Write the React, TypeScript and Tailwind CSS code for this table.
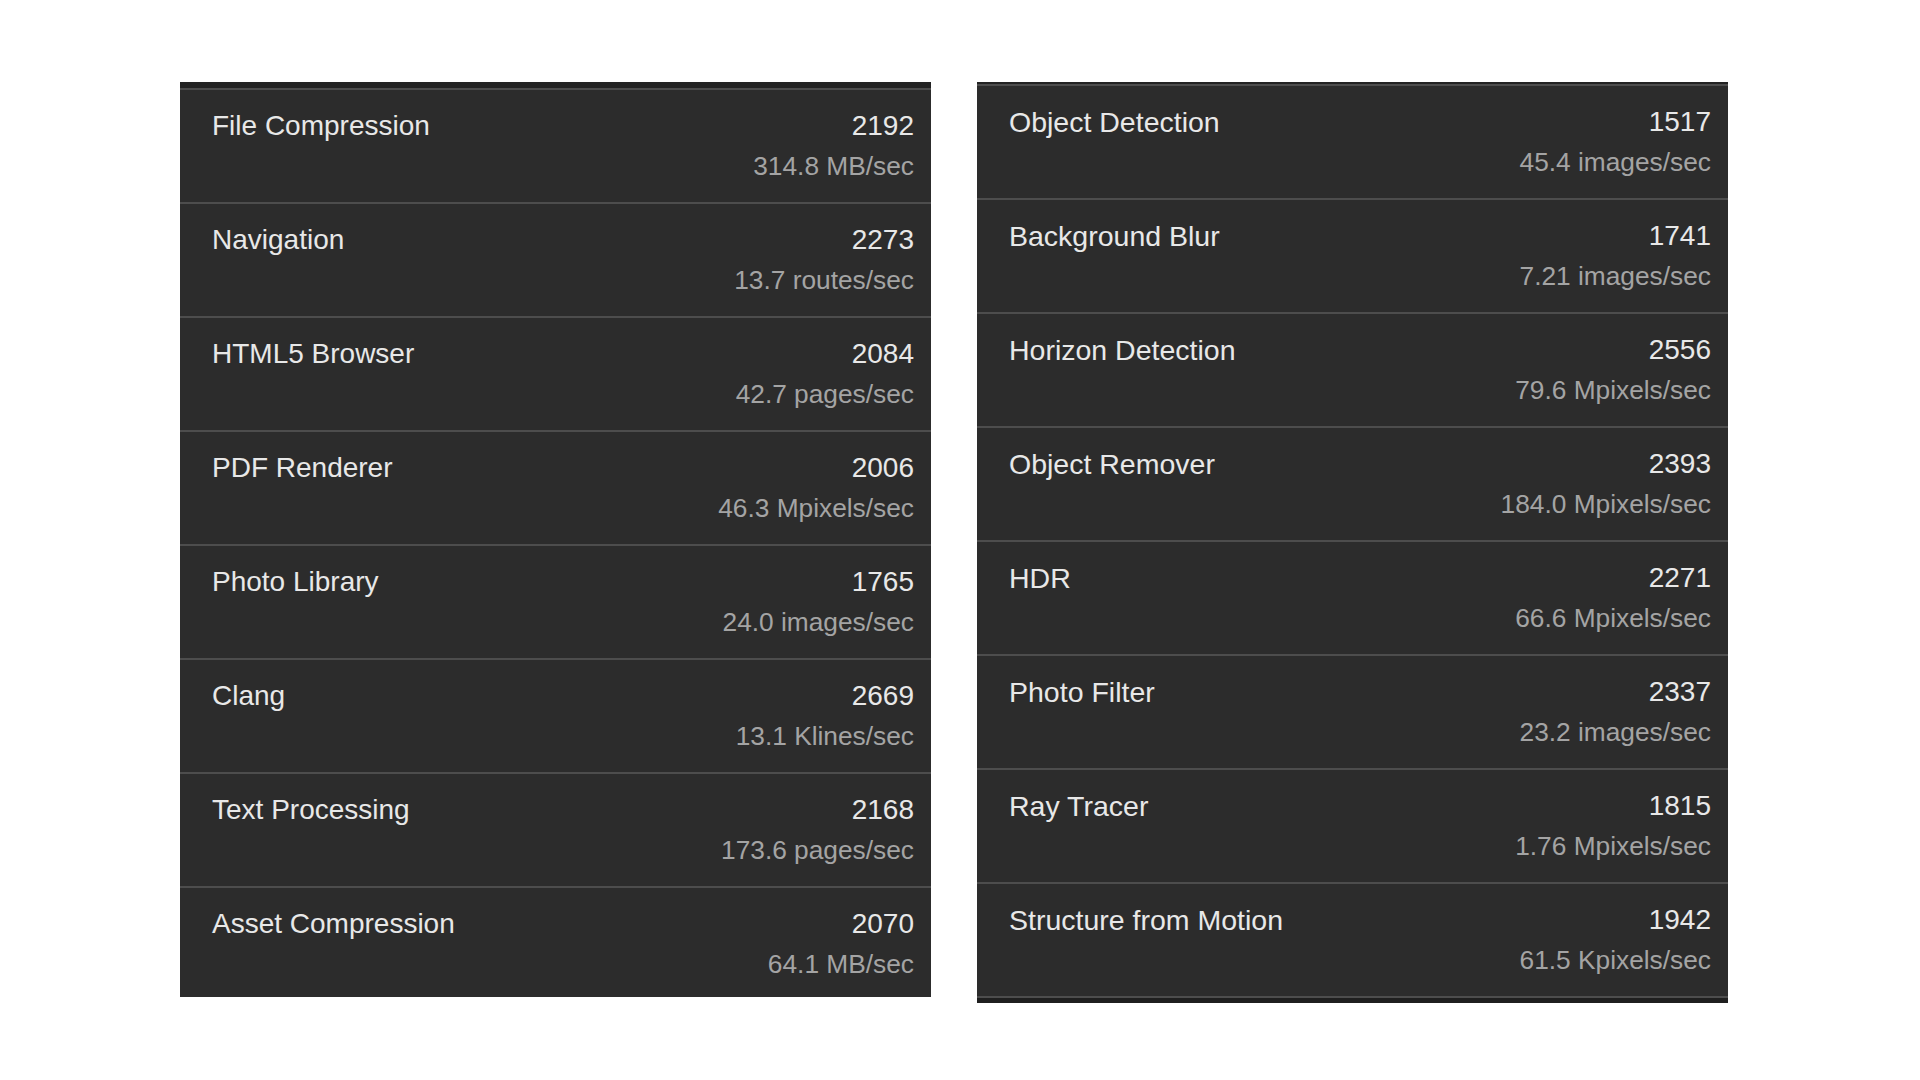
const left = [
  { name: 'File Compression', score: '2192', rate: '314.8 MB/sec' },
  { name: 'Navigation', score: '2273', rate: '13.7 routes/sec' },
  { name: 'HTML5 Browser', score: '2084', rate: '42.7 pages/sec' },
  { name: 'PDF Renderer', score: '2006', rate: '46.3 Mpixels/sec' },
  { name: 'Photo Library', score: '1765', rate: '24.0 images/sec' },
  { name: 'Clang', score: '2669', rate: '13.1 Klines/sec' },
  { name: 'Text Processing', score: '2168', rate: '173.6 pages/sec' },
  { name: 'Asset Compression', score: '2070', rate: '64.1 MB/sec' },
]

const right = [
  { name: 'Object Detection', score: '1517', rate: '45.4 images/sec' },
  { name: 'Background Blur', score: '1741', rate: '7.21 images/sec' },
  { name: 'Horizon Detection', score: '2556', rate: '79.6 Mpixels/sec' },
  { name: 'Object Remover', score: '2393', rate: '184.0 Mpixels/sec' },
  { name: 'HDR', score: '2271', rate: '66.6 Mpixels/sec' },
  { name: 'Photo Filter', score: '2337', rate: '23.2 images/sec' },
  { name: 'Ray Tracer', score: '1815', rate: '1.76 Mpixels/sec' },
  { name: 'Structure from Motion', score: '1942', rate: '61.5 Kpixels/sec' },
]

type Item = { name: string; score: string; rate: string }

function Row({ item, short, wide }: { item: Item; short?: boolean; wide?: boolean }) {
  return (
    <div
      className={
        'flex justify-between border-t-2 border-[#4d4d4d] pl-[32px] pr-[17px] pt-[19px] ' +
        (short ? 'h-[111px]' : 'h-[114px]')
      }
    >
      <div
        className={
          'leading-[34px] text-[#e8e8e8] ' + (wide ? 'text-[28.5px]' : 'text-[28px]')
        }
      >
        {item.name}
      </div>
      <div className="flex flex-col items-end">
        <span className="text-[28px] leading-[34px] text-[#e8e8e8]">{item.score}</span>
        <span className="mt-[6px] text-[26.3px] leading-[34px] text-[#a4a4a4]">{item.rate}</span>
      </div>
    </div>
  )
}

export default function App() {
  return (
    <div
      className="min-h-[1080px] w-[1920px] bg-white"
      style={{ fontFamily: '"Liberation Sans", Arial, sans-serif' }}
    >
      <div className="flex items-start gap-[46px] pl-[180px] pt-[82px]">
        {/* left list */}
        <div className="w-[751px] bg-[#2c2c2c]">
          <div className="h-[6px] bg-[#232323]" />
          {left.map((item, i) => (
            <Row key={item.name} item={item} short={i === left.length - 1} />
          ))}
        </div>

        {/* right list */}
        <div className="w-[751px] bg-[#2c2c2c]">
          <div className="h-[2px] bg-[#232323]" />
          {right.map((item) => (
            <Row key={item.name} item={item} wide />
          ))}
          <div className="h-[2px] bg-[#4d4d4d]" />
          <div className="h-[5px] bg-[#1f1f1f]" />
        </div>
      </div>
    </div>
  )
}
